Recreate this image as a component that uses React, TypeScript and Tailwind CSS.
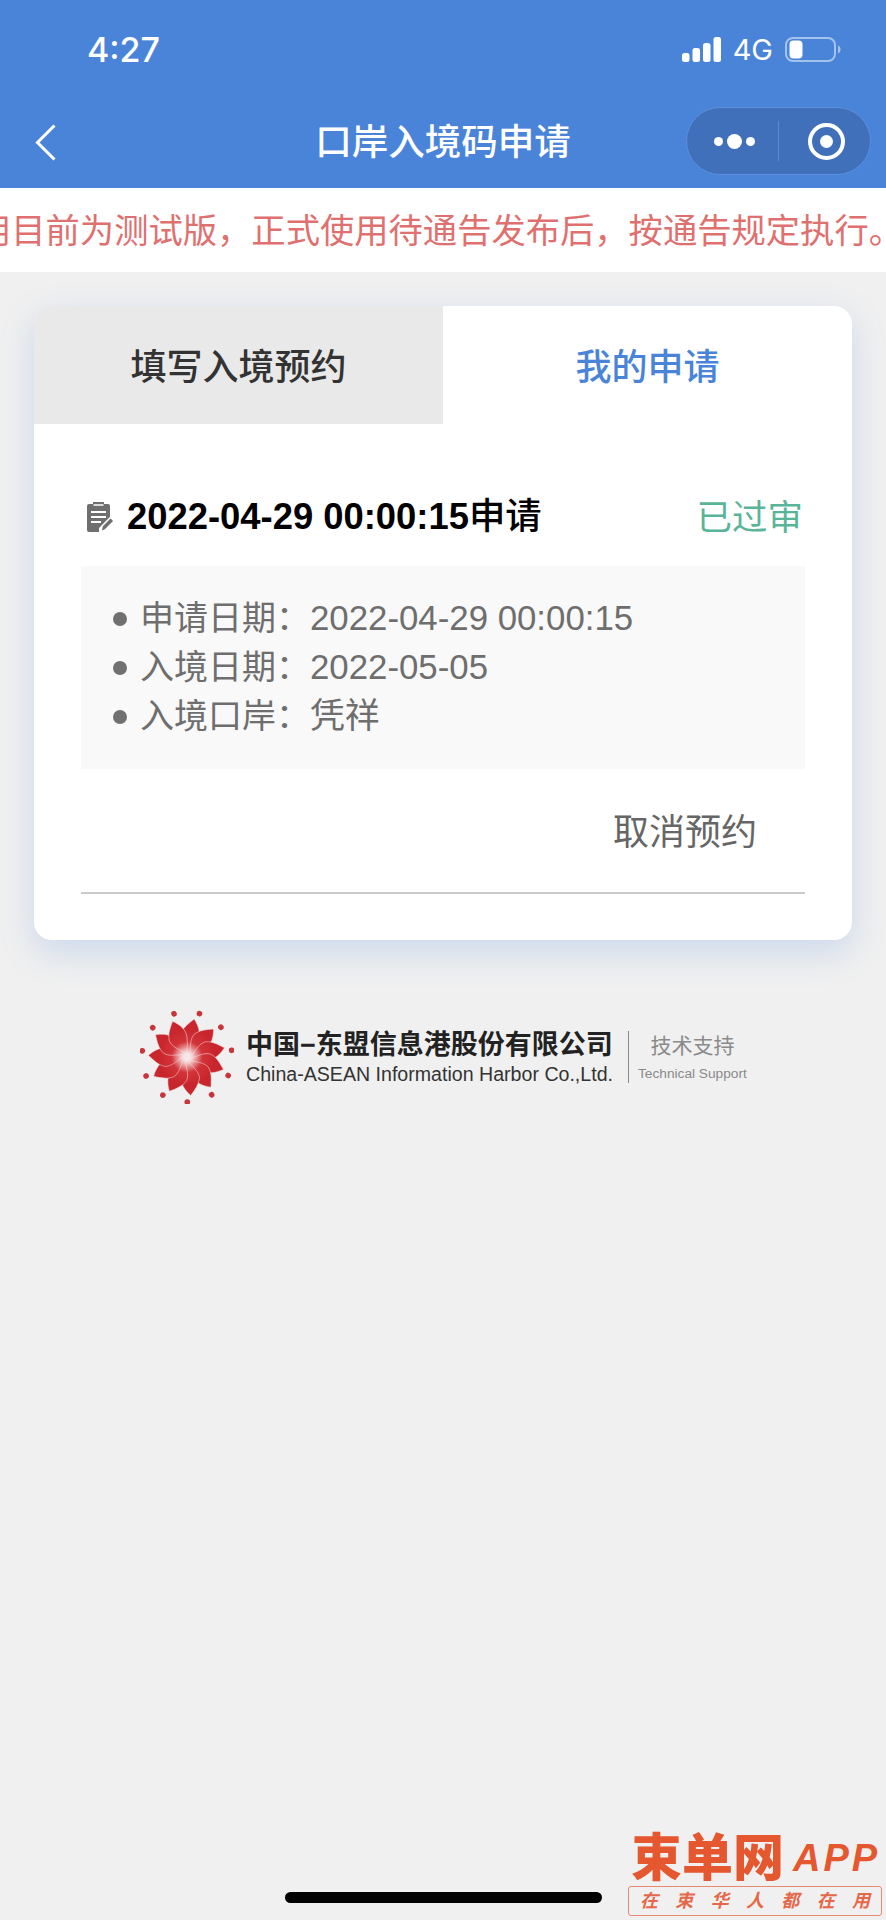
const details = [
  ['申请日期：', '2022-04-29 00:00:15'],
  ['入境日期：', '2022-05-05'],
  ['入境口岸：', '凭祥'],
];

const spins = [0, 1, 2, 3, 4, 5, 6, 7, 8, 9, 10].map((i) => (i * 360) / 11);

function StatusIcons() {
  return (
    <div className="flex items-center">
      <svg width="39" height="25" viewBox="0 0 39 25" fill="#fff">
        <rect x="0" y="16" width="7.500" height="9" rx="2.500" />
        <rect x="10.500" y="11" width="7.500" height="14" rx="2.500" />
        <rect x="21" y="6" width="7.500" height="19" rx="2.500" />
        <rect x="31.500" y="0" width="7.500" height="25" rx="2.500" />
      </svg>
      <span className="ml-[12px] text-[29px] leading-none text-white font-['Inter',sans-serif]">4G</span>
      <svg className="ml-[12px]" width="56" height="25" viewBox="0 0 56 25" fill="none">
        <rect x="1" y="1" width="49" height="23" rx="7" stroke="#a3c2ec" strokeWidth="2" />
        <rect x="4.500" y="3.500" width="13" height="18" rx="4" fill="#fff" />
        <path d="M53 8.500c2 1 2.500 2.500 2.500 4s-.5 3-2.500 4z" fill="#a3c2ec" />
      </svg>
    </div>
  );
}

function NoteIcon() {
  return (
    <svg width="27" height="30" viewBox="0 0 27 30">
      <path d="M2 2h4V0h11v2h4a2 2 0 0 1 2 2v11L12 26v4H2a2 2 0 0 1-2-2V4a2 2 0 0 1 2-2z" fill="#6f6f6f" />
      <path d="M4 10h15M4 15h15M4 20h10" stroke="#fff" strokeWidth="1.800" />
      <path d="M6.500 3h10" stroke="#fff" strokeWidth="1.500" />
      <path d="M14 29.500l1.200-5.500L23.500 15.500l3.500 3.500-8.500 8.500z" fill="#6f6f6f" stroke="#fff" strokeWidth="1.300" />
    </svg>
  );
}

function Flower() {
  return (
    <svg width="94" height="94" viewBox="-50 -50 100 100" className="shrink-0">
      <defs>
        <radialGradient id="petal" gradientUnits="userSpaceOnUse" cx="0" cy="0" r="30">
          <stop offset="0" stopColor="#ffffff" />
          <stop offset="0.22" stopColor="#f3c4c4" />
          <stop offset="0.55" stopColor="#d23439" />
          <stop offset="1" stopColor="#c8262c" />
        </radialGradient>
      </defs>
      {spins.map((a) => (
        <path
          key={a}
          d="M0 0C3 -6 -10 -13 -10 -23C-9 -30 -3 -36 2 -41C8 -34 11 -27 9 -20C7 -12 2 -6 0 0Z"
          fill="url(#petal)"
          stroke="#f3e4e4"
          strokeWidth="0.500"
          transform={`rotate(${a + 8})`}
        />
      ))}
      {spins.map((a) => (
        <circle key={a} cx="0" cy="-48" r="3" fill="#c8353b" transform={`rotate(${a + 16})`} />
      ))}
    </svg>
  );
}

export default function App() {
  return (
    <div className="relative h-[1920px] w-[886px] overflow-hidden bg-[#f0f0f0] font-['Liberation_Sans','Noto_Sans_CJK_SC',sans-serif]">
      {/* Header */}
      <div className="bg-[#4a84d9]">
        <div className="flex h-[98px] items-center justify-between pl-[87px] pr-[45px]">
          <span className="text-[34px] font-medium text-white font-['Inter',sans-serif]">4:27</span>
          <StatusIcons />
        </div>
        <div className="relative flex h-[90px] items-center justify-center">
          <svg className="absolute left-[35px] top-[26px]" width="21" height="37" viewBox="0 0 21 37" fill="none">
            <path d="M19.500 1.500L2.500 18.500L19.500 35.500" stroke="#fff" strokeWidth="3" />
          </svg>
          <h1 className="text-[36.500px] font-medium text-white">口岸入境码申请</h1>
          <div className="absolute right-[15px] top-[9px] flex h-[68px] w-[185px] items-center rounded-full border border-[#5b8fdc] bg-[#4170bb]">
            <div className="flex w-[91px] items-center justify-center gap-[4px] pl-[3px]">
              <span className="h-[9px] w-[9px] rounded-full bg-white" />
              <span className="h-[15px] w-[15px] rounded-full bg-white" />
              <span className="h-[9px] w-[9px] rounded-full bg-white" />
            </div>
            <div className="h-[40px] w-px bg-[#5b8bd0]" />
            <div className="flex flex-1 items-center justify-center pl-[3px]">
              <div className="flex h-[37px] w-[37px] items-center justify-center rounded-full border-[4px] border-white">
                <span className="h-[13px] w-[13px] rounded-full bg-white" />
              </div>
            </div>
          </div>
        </div>
      </div>

      {/* Notice */}
      <div className="flex h-[84px] items-center justify-end overflow-hidden whitespace-nowrap bg-white pt-[3px]">
        <span className="mr-[-17px] shrink-0 text-[34.300px] text-[#df7070]">
          用目前为测试版，正式使用待通告发布后，按通告规定执行。
        </span>
      </div>

      <div className="px-[34px] pt-[34px]">
        {/* Card */}
        <div className="overflow-hidden rounded-[18px] bg-white pb-[46px] shadow-[0_12px_34px_rgba(74,132,217,0.22)]">
          <div className="flex h-[118px] text-[36px] font-medium">
            <div className="flex w-[409px] items-center justify-center bg-[#e9e9e9] pt-[5px] text-[#333]">填写入境预约</div>
            <div className="flex flex-1 items-center justify-center pt-[5px] text-[#4a84d9]">我的申请</div>
          </div>

          <div className="px-[47px]">
            <div className="mt-[67px] flex h-[50px] items-center justify-between pt-[2px]">
              <div className="flex items-center pl-[6px]">
                <NoteIcon />
                <span className="ml-[13px] text-[36.400px] font-bold text-black">2022-04-29 00:00:15<span className="font-medium">申请</span></span>
              </div>
              <span className="pr-[2px] pt-[3px] text-[35.500px] text-[#5ab598]">已过审</span>
            </div>

            <div className="mt-[25px] h-[203px] bg-[#f9f9f9] pl-[32px] pt-[28px]">
              {details.map(([label, value]) => (
                <div key={label} className="flex h-[49px] items-center text-[34px] text-[#6e6e6e]">
                  <span className="mr-[13px] h-[14px] w-[14px] rounded-full bg-[#707070]" />
                  <span>{label}</span>
                  <span className="text-[34.800px]">{value}</span>
                </div>
              ))}
            </div>

            <div className="mt-[39px] flex h-[50px] justify-end pr-[48px] text-[36px] leading-[50px] text-[#666]">取消预约</div>
            <div className="mt-[34px] h-[2px] bg-[#cbcbcb]" />
          </div>
        </div>

        {/* Footer logo */}
        <div className="ml-[106px] mt-[70px] flex items-center">
          <Flower />
          <div className="ml-[12px] flex w-[372px] flex-col">
            <span className="text-[27px] font-bold leading-[32px] whitespace-nowrap text-[#222]">中国−东盟信息港股份有限公司</span>
            <span className="mt-[1px] text-[19.600px] leading-[24px] whitespace-nowrap text-[#333]">China-ASEAN Information Harbor Co.,Ltd.</span>
          </div>
          <div className="ml-[10px] mr-[9px] h-[52px] w-px bg-[#8a8a8a]" />
          <div className="flex flex-col items-center">
            <span className="text-[21px] leading-[30px] whitespace-nowrap text-[#8a8a8a]">技术支持</span>
            <span className="mt-[3px] text-[13.700px] leading-[20px] whitespace-nowrap text-[#8a8a8a]">Technical Support</span>
          </div>
        </div>
      </div>

      {/* Home bar */}
      <div className="absolute left-[285px] top-[1892px] h-[11px] w-[317px] rounded-full bg-black" />

      {/* Watermark */}
      <div className="absolute left-[628px] top-[1830px] w-[254px]">
        <div className="flex h-[56px] items-center whitespace-nowrap pl-[3px] text-[#e5572f]">
          <span className="shrink-0 text-[51px] font-black leading-none">束单网</span>
          <span className="ml-[9px] shrink-0 text-[38px] font-bold italic leading-none tracking-[3px]">APP</span>
        </div>
        <div className="flex h-[30px] items-center justify-between rounded-[3px] border border-[#e58a70] px-[11px] text-[18px] font-bold italic text-[#e5684a]">
          {['在', '束', '华', '人', '都', '在', '用'].map((c, i) => (
            <span key={i}>{c}</span>
          ))}
        </div>
      </div>
    </div>
  );
}
